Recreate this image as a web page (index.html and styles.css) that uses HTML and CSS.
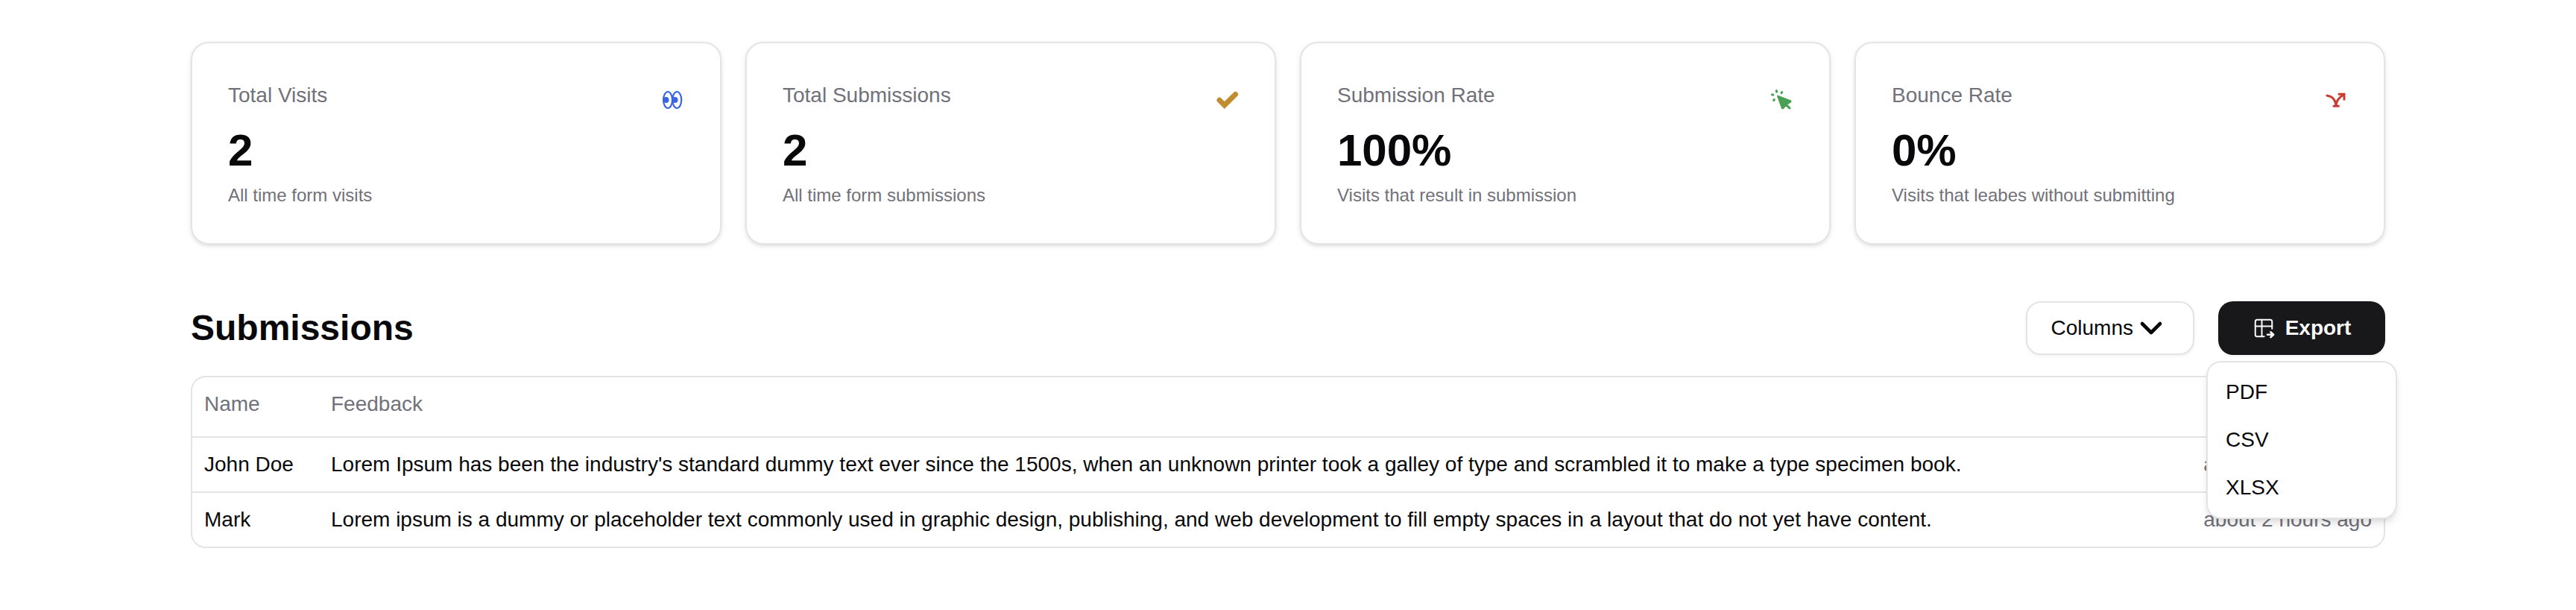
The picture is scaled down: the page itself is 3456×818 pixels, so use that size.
FILE: index.html
```
<!DOCTYPE html>
<html lang="en">
<head>
    <meta charset="UTF-8">
    <meta name="viewport" content="width=device-width, initial-scale=1.0">
    <title>Form Submissions</title>
    <link rel="stylesheet" href="styles.css">
</head>
<body>
<main class="container">
    <section class="stats">
        <div class="card">
            <div class="card-header">
                <h3>Total Visits</h3>
                <svg class="stat-icon blue" viewBox="0 0 28 28" fill="none" stroke="currentColor" stroke-width="2.2">
                    <ellipse cx="6" cy="14" rx="6" ry="11"/>
                    <ellipse cx="18.2" cy="14" rx="6" ry="11"/>
                    <circle cx="3.5" cy="14" r="4" fill="currentColor" stroke="none"/>
                    <circle cx="15.5" cy="14" r="4" fill="currentColor" stroke="none"/>
                </svg>
            </div>
            <div class="value">2</div>
            <p class="helper">All time form visits</p>
        </div>
        <div class="card">
            <div class="card-header">
                <h3>Total Submissions</h3>
                <svg class="stat-icon yellow" viewBox="0 0 28 28" fill="none" stroke="currentColor" stroke-width="7" stroke-linecap="round">
                    <path d="M2 14.3 8.8 21 23.5 6.5"/>
                </svg>
            </div>
            <div class="value">2</div>
            <p class="helper">All time form submissions</p>
        </div>
        <div class="card">
            <div class="card-header">
                <h3>Submission Rate</h3>
                <svg class="stat-icon green" viewBox="0 0 28 28" fill="currentColor" stroke="currentColor" stroke-linecap="round" stroke-linejoin="round">
                    <path stroke-width="2" d="M7 8.7 24.5 15.4 24 17 18.6 20 23.6 25 22.7 25.5 17.6 20.6 14.6 25.3 13 25.3Z"/>
                    <path stroke-width="3" d="M5.2 1.6l.4 1.6M12.8 3.6l-.8 1.1M-.6 6.9l1.4.3M2.3 13.6l-.7 1"/>
                </svg>
            </div>
            <div class="value">100%</div>
            <p class="helper">Visits that result in submission</p>
        </div>
        <div class="card">
            <div class="card-header">
                <h3>Bounce Rate</h3>
                <svg class="stat-icon red" viewBox="0 0 28 28" fill="none" stroke="currentColor" stroke-width="3" stroke-linecap="round">
                    <path d="M0 8.2C6 8.6 11 13 12.1 21.5C12.4 15.5 16 10.5 22 7.2"/>
                    <path d="M16 6.3h7v7M9 22.2h6.4"/>
                </svg>
            </div>
            <div class="value">0%</div>
            <p class="helper">Visits that leabes without submitting</p>
        </div>
    </section>

    <section class="submissions">
        <div class="toolbar">
            <h2>Submissions</h2>
            <div class="actions">
                <button type="button" class="btn btn-outline">
                    Columns
                    <svg class="chevron" viewBox="0 0 24 24" fill="none" stroke="currentColor" stroke-width="2.3" stroke-linecap="round" stroke-linejoin="round">
                        <path d="m6 9 6 6 6-6"/>
                    </svg>
                </button>
                <div class="dropdown">
                    <button type="button" class="btn btn-primary" aria-haspopup="menu" aria-expanded="true">
                        <svg class="export-icon" viewBox="0 0 24 24" fill="none" stroke="currentColor" stroke-width="1.6" stroke-linecap="round" stroke-linejoin="round">
                            <path d="M12.5 21H5a2 2 0 0 1-2-2V5a2 2 0 0 1 2-2h14a2 2 0 0 1 2 2v7.5"/>
                            <path d="M3 10h18M10 3v18"/>
                            <path stroke-width="2" d="M16 19h6M19.5 16.2l3 2.8-3 2.8"/>
                        </svg>
                        Export
                    </button>
                    <div class="menu" role="menu">
                        <button type="button" role="menuitem">PDF</button>
                        <button type="button" role="menuitem">CSV</button>
                        <button type="button" role="menuitem">XLSX</button>
                    </div>
                </div>
            </div>
        </div>

        <div class="table-wrap">
            <table>
                <thead>
                    <tr>
                        <th class="name">Name</th>
                        <th>Feedback</th>
                        <th class="date" aria-label="Submitted at"></th>
                    </tr>
                </thead>
                <tbody>
                    <tr>
                        <td>John Doe</td>
                        <td>Lorem Ipsum has been the industry's standard dummy text ever since the 1500s, when an unknown printer took a galley of type and scrambled it to make a type specimen book.</td>
                        <td class="date">about 2 hours ago</td>
                    </tr>
                    <tr>
                        <td>Mark</td>
                        <td>Lorem ipsum is a dummy or placeholder text commonly used in graphic design, publishing, and web development to fill empty spaces in a layout that do not yet have content.</td>
                        <td class="date">about 2 hours ago</td>
                    </tr>
                </tbody>
            </table>
        </div>
    </section>
</main>
</body>
</html>
```
FILE: styles.css
```
* {
    box-sizing: border-box;
}
body {
    margin: 0;
    background: #fff;
    color: #09090b;
    font-family: "Liberation Sans", Arial, sans-serif;
    font-size: 28px;
    line-height: 40px;
}
h2, h3, p {
    margin: 0;
}
button {
    font: inherit;
    color: inherit;
    cursor: pointer;
}
.container {
    max-width: 3072px;
    margin: 0 auto;
    padding: 56px 64px;
}

/* stat cards */
.stats {
    display: grid;
    grid-template-columns: repeat(4, 1fr);
    gap: 32px;
}
.card {
    padding: 48px;
    border: 2px solid #e4e4e7;
    border-radius: 24px;
    box-shadow: 0 2px 6px rgba(0, 0, 0, 0.1), 0 2px 4px -2px rgba(0, 0, 0, 0.1);
}
.card-header {
    display: flex;
    justify-content: space-between;
    align-items: flex-start;
    padding: 2px 0 18px;
}
.card-header h3 {
    font-size: 28px;
    font-weight: normal;
    color: #71717a;
}
.stat-icon {
    width: 28px;
    height: 28px;
    margin-top: 12px;
    overflow: visible;
}
.blue {
    color: #3a66e6;
}
.yellow {
    color: #c18c2f;
}
.green {
    color: #4aa153;
}
.red {
    color: #cb3a30;
}
.value {
    font-size: 60px;
    font-weight: bold;
    line-height: 72px;
}
.helper {
    padding-top: 8px;
    font-size: 24px;
    line-height: 32px;
    color: #71717a;
}

/* submissions */
.submissions {
    margin-top: 76px;
}
.toolbar {
    display: flex;
    justify-content: space-between;
    align-items: center;
    margin-bottom: 28px;
}
.toolbar h2 {
    font-size: 48px;
    line-height: 64px;
}
.actions {
    display: flex;
    gap: 32px;
}
.btn {
    display: flex;
    align-items: center;
    justify-content: center;
    height: 72px;
    border-radius: 20px;
    box-shadow: 0 2px 4px rgba(0, 0, 0, 0.05);
}
.btn-outline {
    padding: 0 32px;
    border: 2px solid #e4e4e7;
    background: #fff;
}
.btn-primary {
    gap: 14px;
    width: 224px;
    padding: 0;
    border: none;
    background: #18181b;
    color: #fafafa;
    font-weight: bold;
}
.chevron {
    width: 48px;
    height: 48px;
}
.export-icon {
    width: 30px;
    height: 30px;
}
.dropdown {
    position: relative;
}
.menu {
    position: absolute;
    top: 80px;
    right: -16px;
    z-index: 10;
    width: 256px;
    padding: 8px;
    border: 2px solid #e4e4e7;
    border-radius: 20px;
    background: #fff;
    box-shadow: 0 8px 12px -2px rgba(0, 0, 0, 0.1), 0 4px 8px -4px rgba(0, 0, 0, 0.1);
}
.menu button {
    display: block;
    width: 100%;
    padding: 12px 16px;
    border: none;
    border-radius: 16px;
    background: none;
    text-align: left;
}
.menu button:hover {
    background: #f4f4f5;
}
.table-wrap {
    border: 2px solid #e4e4e7;
    border-radius: 20px;
    overflow: hidden;
}
table {
    width: 100%;
    border-collapse: collapse;
}
th, td {
    padding: 16px;
    text-align: left;
    vertical-align: top;
}
th {
    height: 80px;
    font-weight: normal;
    color: #71717a;
}
tbody tr {
    border-top: 2px solid #e4e4e7;
}
.name {
    width: 170px;
}
.date {
    text-align: right;
    white-space: nowrap;
    color: #71717a;
}
```
